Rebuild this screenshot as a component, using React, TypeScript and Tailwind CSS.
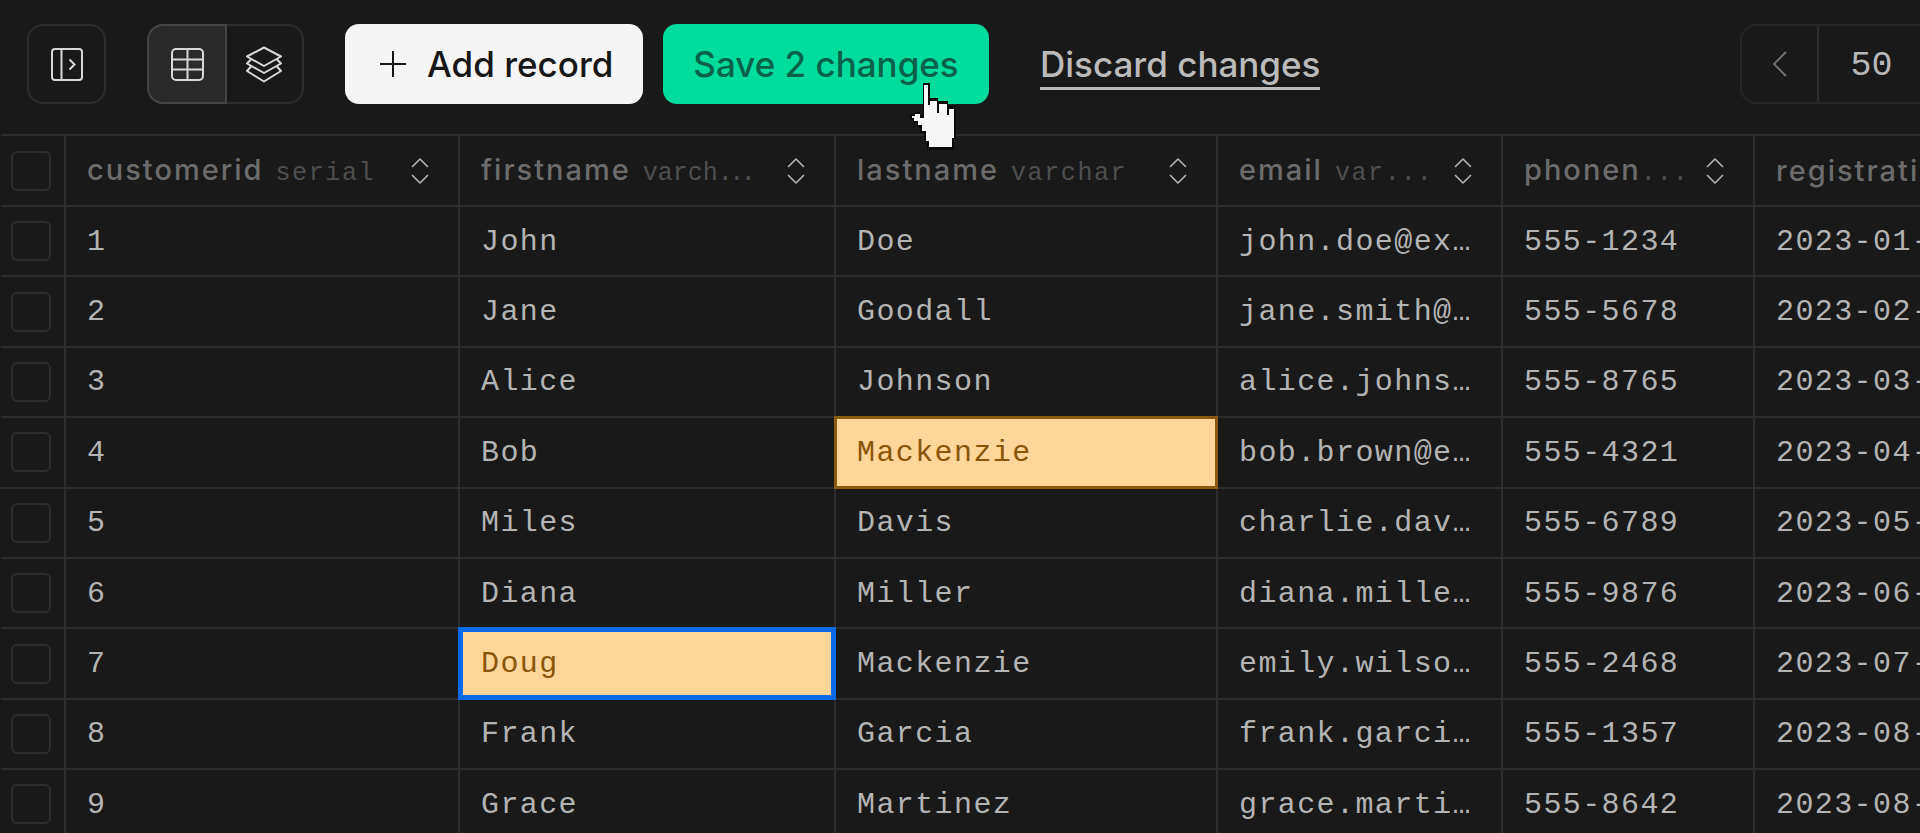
import React from "react";

const rows = [
  ["1", "John", "Doe", "john.doe@ex…", "555-1234", "2023-01-15"],
  ["2", "Jane", "Goodall", "jane.smith@…", "555-5678", "2023-02-20"],
  ["3", "Alice", "Johnson", "alice.johns…", "555-8765", "2023-03-12"],
  ["4", "Bob", "Mackenzie", "bob.brown@e…", "555-4321", "2023-04-05"],
  ["5", "Miles", "Davis", "charlie.dav…", "555-6789", "2023-05-18"],
  ["6", "Diana", "Miller", "diana.mille…", "555-9876", "2023-06-22"],
  ["7", "Doug", "Mackenzie", "emily.wilso…", "555-2468", "2023-07-30"],
  ["8", "Frank", "Garcia", "frank.garci…", "555-1357", "2023-08-14"],
  ["9", "Grace", "Martinez", "grace.marti…", "555-8642", "2023-08-25"],
];

const headers: { name: string; type: string; sort: boolean; typeCls: string; dotCls: string }[] = [
  { name: "customerid", type: "serial", sort: true, typeCls: "tracking-[1.6px]", dotCls: "" },
  { name: "firstname", type: "varch", sort: true, typeCls: "tracking-[0px]", dotCls: "tracking-[-3.5px]" },
  { name: "lastname", type: "varchar", sort: true, typeCls: "tracking-[1.6px]", dotCls: "" },
  { name: "email", type: "var", sort: true, typeCls: "tracking-[1.6px]", dotCls: "tracking-[1px]" },
  { name: "phonen", type: "", sort: true, typeCls: "", dotCls: "tracking-[1px]" },
  { name: "registrationdate", type: "", sort: false, typeCls: "", dotCls: "" },
];

function Sort() {
  return (
    <svg width="20" height="28" viewBox="0 0 20 28" fill="none" stroke="#b5b5b5" strokeWidth="1.6" className="shrink-0">
      <path d="M2.5 9.5 10 2l7.5 7.5M2.5 18.500 10 26l7.500-7.500" strokeLinecap="round" strokeLinejoin="round" />
    </svg>
  );
}

function Check() {
  return <div className="w-[40px] h-[40px] rounded-[6px] border-2 border-[#2c2c2c] ml-[10px]" />;
}

function Cell({ children, kind }: { children: React.ReactNode; kind?: "orange" | "blue" }) {
  let cls = "bg-[#191919] text-[#b4b4b4] pl-[21px]";
  if (kind === "orange") cls = "relative z-10 bg-[#fed69a] text-[#8a5506] border border-[#8a5a10] outline-2 outline-[#8a5a10] pl-[20px]";
  if (kind === "blue") cls = "relative z-10 bg-[#fed69a] text-[#8a5506] border-[3px] border-[#0a6be8] outline-2 outline-[#0a6be8] pl-[18px]";
  return (
    <div className={`${cls} pt-[2px] flex items-center overflow-hidden whitespace-nowrap font-['Liberation_Mono',monospace] text-[30px] tracking-[1.4px]`}>
      {children}
    </div>
  );
}

function Hand() {
  return (
    <svg className="absolute left-[910px] top-[83px] z-20" width="48" height="68" viewBox="0 0 48 68" shapeRendering="crispEdges">
      <path fill="#0a0a0a" d="M13 0H20V15H28V18H38V23H46V56H44V67H17V60H14V50H10V44H7V40H3V37H0V31H5V29H10V32H13Z" />
      <path fill="#f6f6f6" d="M14 2H18V22H20V18H27V30H29V21H37V32H39V26H44V55H42V64H19V58H16V48H12V42H8V38H4V35H2V33H5V31H10V35H14Z" />
    </svg>
  );
}

export default function App() {
  return (
    <div className="relative h-screen w-full overflow-hidden bg-[#191919] font-['Inter',sans-serif]">
      <Hand />
      <div className="flex items-start h-[134px] pt-[24px] pl-[27px] overflow-hidden">
        <button className="w-[79px] h-[80px] shrink-0 rounded-[16px] border-2 border-[#2c2c2c] flex items-center justify-center">
          <svg width="32" height="33" viewBox="0 0 32 33" fill="none" stroke="#d8d8d8" strokeWidth="2">
            <rect x="1" y="1" width="30" height="31" rx="3" />
            <path d="M10.500 1v31M18.500 11.500l5 5-5 5" />
          </svg>
        </button>
        <div className="ml-[41px] w-[157px] h-[80px] shrink-0 rounded-[16px] border-2 border-[#2c2c2c] flex">
          <div className="-m-[2px] w-[80px] h-[80px] rounded-l-[16px] border-2 border-[#444444] bg-[#2a2a2a] flex items-center justify-center">
            <svg width="33" height="33" viewBox="0 0 33 33" fill="none" stroke="#d8d8d8" strokeWidth="2">
              <rect x="1" y="1" width="31" height="31" rx="4" />
              <path d="M16.500 1v31M1 11.500h31M1 21.500h31" />
            </svg>
          </div>
          <div className="flex-1 flex items-center justify-center">
            <svg width="38" height="37" viewBox="0 0 38 37" fill="none" stroke="#d8d8d8" strokeWidth="2" strokeLinejoin="round" strokeLinecap="round">
              <path d="M19 1.500 36 10.500 19 20 2 10.500Z" />
              <path d="M6 13.500 2 17.500 19 27 36 17.500 32 13.500" />
              <path d="M6 20.500 2 25 19 35.500 36 25 32 20.500" />
            </svg>
          </div>
        </div>
        <button className="ml-[41px] w-[298px] h-[80px] shrink-0 rounded-[14px] bg-[#f5f5f5] text-[#171717] flex items-center pl-[34px] gap-[20px] text-[35px] font-medium">
          <svg width="28" height="28" viewBox="0 0 28 28" stroke="#171717" strokeWidth="2"><path d="M14 1v26M1 14h26" /></svg>
          <span>Add record</span>
        </button>
        <button className="ml-[20px] w-[326px] h-[80px] shrink-0 rounded-[14px] bg-[#00dc9b] text-[#0b6149] flex items-center justify-center text-[35px] font-medium">
          Save 2 changes
        </button>
        <span className="ml-[51px] mt-[10px] shrink-0 h-[56px] border-b-[3px] border-[#bbbbbb] text-[#bbbbbb] text-[35px] font-medium leading-[60px]">
          Discard changes
        </span>
        <div className="ml-[420px] shrink-0 w-[300px] h-[80px] rounded-[16px] border-2 border-[#252525] flex text-[#b8b8b8]">
          <div className="w-[77px] border-r-2 border-[#2c2c2c] flex items-center justify-center">
            <svg width="16" height="26" viewBox="0 0 16 26" fill="none" stroke="#6e6e6e" strokeWidth="2"><path d="M14 1 2 13l12 12" /></svg>
          </div>
          <div className="pl-[31px] pt-[4px] flex items-center font-['Liberation_Mono',monospace] text-[35px]">50</div>
        </div>
      </div>
      <div className="ml-px pt-[2px] grid gap-[2px] bg-[#2c2c2c] grid-cols-[63px_392px_374px_380px_283px_250px_400px] grid-rows-[69px_repeat(9,68.4px)]">
        <div className="bg-[#191919] flex items-center"><Check /></div>
        {headers.map((h) => (
          <div key={h.name} className="bg-[#191919] pl-[21px] pr-[28px] flex items-center overflow-hidden whitespace-nowrap">
            <div className="flex items-baseline">
              <span className="text-[#6c6c6c] text-[29px] font-medium tracking-[2px]">{h.name}</span>
              {(h.type || h.dotCls) && (
                <span className={`${h.type ? "ml-[12px]" : ""} ${h.typeCls} text-[#4f4f4f] font-['Liberation_Mono',monospace] text-[25px]`}>
                  {h.type}
                  {h.dotCls && <span className={h.dotCls}>...</span>}
                </span>
              )}
            </div>
            {h.sort && <span className="ml-auto flex"><Sort /></span>}
          </div>
        ))}
        {rows.flatMap((r) => [
          <div key={r[0] + "c"} className="bg-[#191919] flex items-center"><Check /></div>,
          ...r.map((v, i) => (
            <Cell key={r[0] + i} kind={r[0] === "4" && i === 2 ? "orange" : r[0] === "7" && i === 1 ? "blue" : undefined}>
              {v}
            </Cell>
          )),
        ])}
      </div>
    </div>
  );
}
